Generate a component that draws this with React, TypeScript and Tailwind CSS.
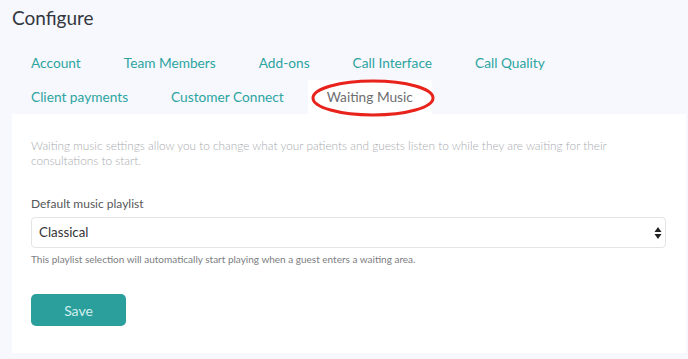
import React from "react";

const tabsRow1 = ["Account", "Team Members", "Add-ons", "Call Interface", "Call Quality"];
const tabsRow2 = ["Client payments", "Customer Connect"];

export default function App() {
  return (
    <div
      className="w-[688px] h-[359px] bg-[#f7f8fd] overflow-hidden"
      style={{ fontFamily: "Lato, 'Noto Sans', sans-serif" }}
    >
      <div className="pl-[12px] pr-[2px] pt-[6px]">
        <h1 className="text-[19px] leading-[24px] text-[#333740] font-normal">Configure</h1>
        <div className="mt-[16px]">
          <div className="flex gap-[5px] h-[34px] items-center">
            {tabsRow1.map((t) => (
              <div key={t} className="px-[19px] text-[13.7px] text-[#2ba4a1]">
                {t}
              </div>
            ))}
          </div>
          <div className="flex gap-[5px] h-[34px] items-stretch">
            {tabsRow2.map((t) => (
              <div key={t} className="px-[19px] text-[13.7px] text-[#2ba4a1] flex items-center">
                {t}
              </div>
            ))}
            <div className="relative px-[19px] text-[13.7px] text-[#6e6e70] bg-white flex items-center">
              Waiting Music
              <svg
                className="absolute left-[2px] top-[-1px]"
                width="126"
                height="38"
                viewBox="0 0 126 38"
              >
                <ellipse cx="63" cy="19" rx="60" ry="17" fill="none" stroke="#e8231b" strokeWidth="3" />
              </svg>
            </div>
          </div>
        </div>
        <div className="bg-white h-[239px] px-[19px] pt-[24px]">
          <p className="text-[11.8px] leading-[15px] text-[#a9abb0] font-light">
            Waiting music settings allow you to change what your patients and guests listen to while they are waiting for their
            <br />
            consultations to start.
          </p>
          <div className="mt-[28px] text-[12px] leading-[16px] text-[#555759]">Default music playlist</div>
          <div className="mt-[5px] w-[635px] h-[31px] border border-[#e3e4e8] rounded-[4px] flex items-center justify-between pl-[7px] pr-[3px]">
            <span className="text-[13.3px] text-[#333]">Classical</span>
            <svg width="8" height="14" viewBox="0 0 8 14">
              <path d="M4 1 L7.5 6 L0.5 6 Z" fill="#222" />
              <path d="M4 13 L7.5 8 L0.5 8 Z" fill="#222" />
            </svg>
          </div>
          <div className="mt-[4px] text-[10px] leading-[14px] text-[#7c7e82]">
            This playlist selection will automatically start playing when a guest enters a waiting area.
          </div>
          <button className="mt-[28px] w-[95px] h-[32px] rounded-[5px] bg-[#2a9f9c] text-[#d4efee] text-[14px]">
            Save
          </button>
        </div>
      </div>
    </div>
  );
}
